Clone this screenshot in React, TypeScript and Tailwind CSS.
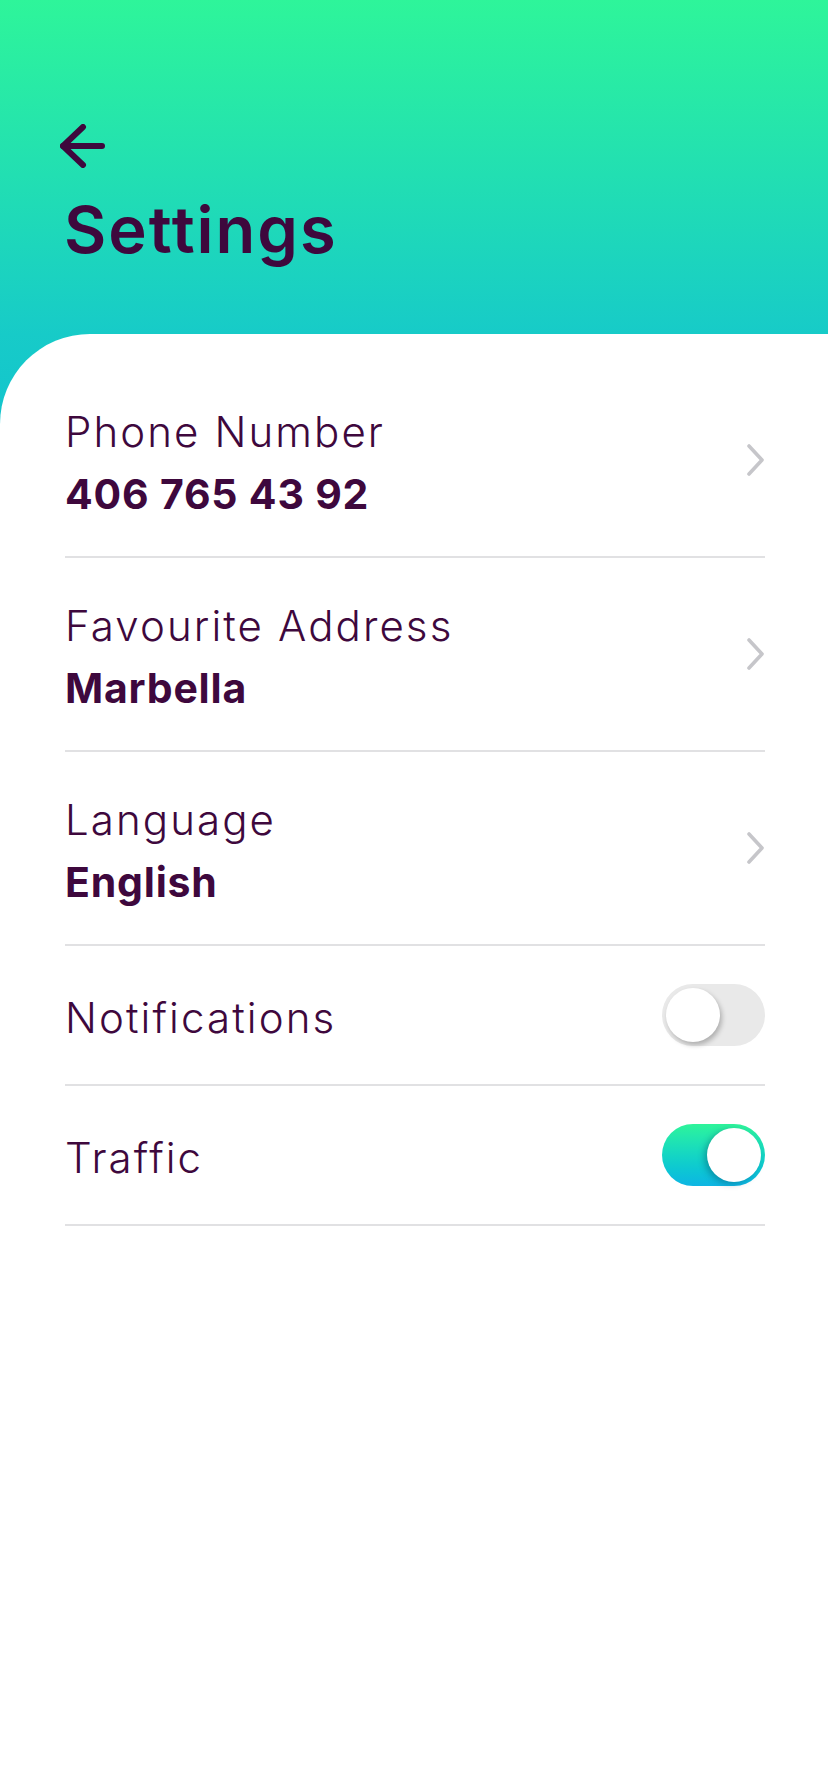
const font = { fontFamily: "Inter, 'Noto Sans', sans-serif" };

function Chevron() {
  return (
    <svg width="20" height="32" viewBox="0 0 20 32" fill="none" stroke="#c6c6ca" strokeWidth="3.6" strokeLinecap="round" strokeLinejoin="round" className="mr-[-1px]">
      <path d="M3 2 L16 16 L3 30" />
    </svg>
  );
}

function LinkRow({ label, value }: { label: string; value: string }) {
  return (
    <div className="flex h-[194px] items-center justify-between border-b-2 border-[#e1e1e3]">
      <div className="flex flex-col pt-[6px]">
        <span className="text-[42px] font-light leading-[62px] tracking-[2.1px] text-[#3e083d]">
          {label}
        </span>
        <span className="text-[41px] font-bold leading-[62px] tracking-[0.8px] text-[#3e083d]">
          {value}
        </span>
      </div>
      <Chevron />
    </div>
  );
}

function Toggle({ on }: { on: boolean }) {
  if (on) {
    return (
      <div className="relative h-[62px] w-[103px] rounded-full bg-gradient-to-b from-[#2ef49a] to-[#0fb5e3]">
        <div className="absolute right-[4px] top-[4px] h-[54px] w-[54px] rounded-full bg-white shadow-[-3px_2px_6px_rgba(0,60,90,0.35)]" />
      </div>
    );
  }
  return (
    <div className="relative h-[62px] w-[103px] rounded-full bg-[#e9e9e9]">
      <div className="absolute left-[4px] top-[4px] h-[54px] w-[54px] rounded-full bg-white shadow-[2px_3px_5px_rgba(0,0,0,0.25)]" />
    </div>
  );
}

function ToggleRow({ label, on }: { label: string; on: boolean }) {
  return (
    <div className="flex h-[140px] items-center justify-between border-b-2 border-[#e1e1e3]">
      <span className="pt-[4px] text-[42px] font-light tracking-[2.1px] text-[#3e083d]">{label}</span>
      <Toggle on={on} />
    </div>
  );
}

export default function App() {
  return (
    <div
      className="min-h-screen w-full bg-[linear-gradient(180deg,#2ef59a_0px,#17cbc8_334px,#12c3cf_440px)]"
      style={font}
    >
      {/* Header */}
      <div className="h-[334px] px-[60px] pt-[124px]">
        <svg width="46" height="44" viewBox="0 0 46 44" fill="none" stroke="#3e083d" strokeWidth="6" strokeLinecap="round" strokeLinejoin="round">
          <path d="M23 3 L3 22 L23 41" />
          <path d="M3 22 H42" />
        </svg>
        <h1 className="mt-[29px] pl-[4px] text-[65px] font-semibold leading-none tracking-[2px] text-[#3e083d]">
          Settings
        </h1>
      </div>

      {/* Card */}
      <div className="min-h-[1458px] rounded-tl-[90px] bg-white pl-[65px] pr-[63px] pt-[30px]">
        <LinkRow label="Phone Number" value="406 765 43 92" />
        <LinkRow label="Favourite Address" value="Marbella" />
        <LinkRow label="Language" value="English" />
        <ToggleRow label="Notifications" on={false} />
        <ToggleRow label="Traffic" on={true} />
      </div>
    </div>
  );
}
